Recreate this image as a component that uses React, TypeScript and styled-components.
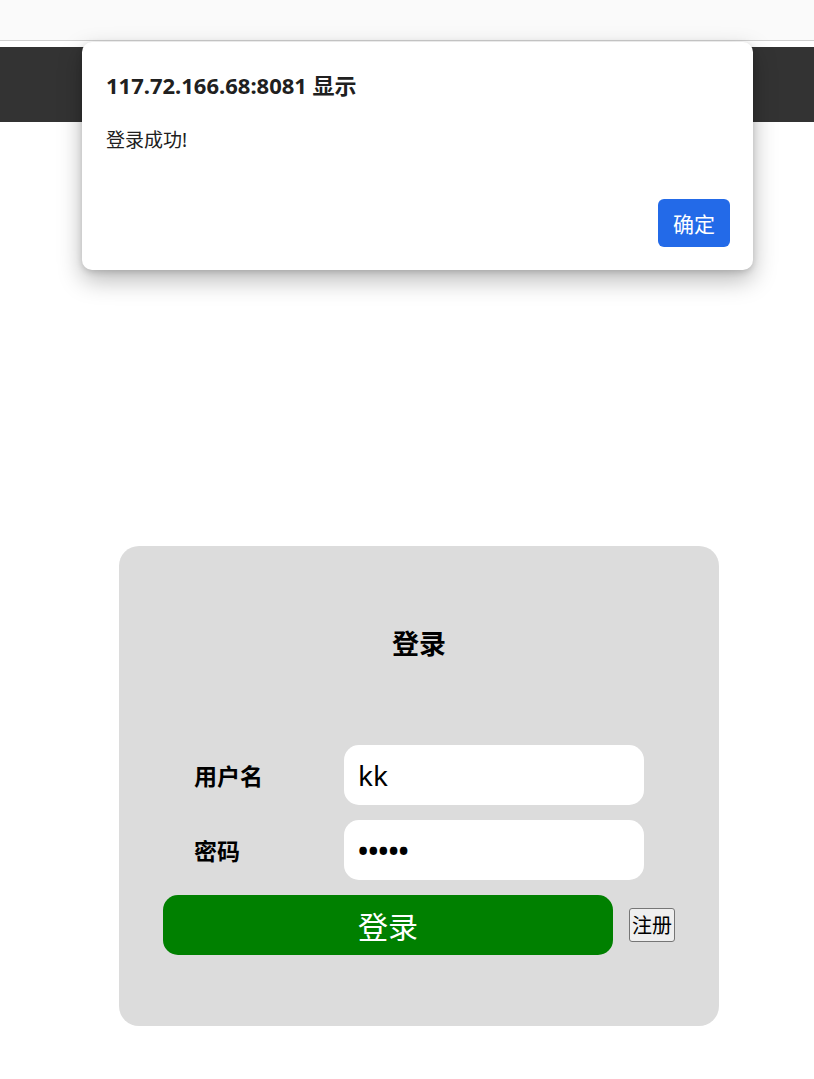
import React from 'react'
import styled, { createGlobalStyle } from 'styled-components'

const GlobalStyle = createGlobalStyle`
    html, body {
        margin: 0;
        padding: 0;
        background: #fff;
        font-family: 'Noto Sans', 'Noto Sans CJK SC', sans-serif;
    }
`

const Page = styled.div`
    position: relative;
    width: 814px;
    min-height: 1079px;
    background: #fff;
`

const BrowserStrip = styled.div`
    height: 40px;
    background: #fafafa;
    border-bottom: 1px solid #d0d0d0;
`

const Header = styled.div`
    margin-top: 6px;
    height: 75px;
    background: #333;
`

const Card = styled.div`
    margin: 424px 0 0 119px;
    width: 600px;
    height: 480px;
    box-sizing: border-box;
    background: #dcdcdc;
    border-radius: 20px;
    display: flex;
    flex-direction: column;
`

const Title = styled.h2`
    margin: 83px 0 0;
    line-height: 30px;
    font-size: 27px;
    font-weight: bold;
    text-align: center;
    color: #000;
`

const Form = styled.div`
    margin-top: 86px;
    display: flex;
    flex-direction: column;
    gap: 15px;
`

const Row = styled.div`
    display: grid;
    grid-template-columns: 150px 300px;
    align-items: center;
    padding-left: 75px;
`

const Label = styled.label`
    font-size: 23px;
    font-weight: bold;
    color: #000;
`

const Input = styled.input`
    width: 300px;
    height: 60px;
    box-sizing: border-box;
    border: none;
    border-radius: 15px;
    background: #fff;
    padding: 0 14px;
    font-family: 'Noto Sans', 'Noto Sans CJK SC', sans-serif;
    font-size: 28px;
    color: #000;
    outline: none;

    &[type='password'] {
        font-size: 27px;
        font-weight: bold;
    }
`

const ActionRow = styled.div`
    display: flex;
    align-items: center;
    gap: 16px;
    padding-left: 44px;
`

const SubmitButton = styled.button`
    width: 450px;
    height: 60px;
    border: none;
    border-radius: 15px;
    background: #008000;
    color: #fff;
    font-family: 'Noto Sans CJK SC', sans-serif;
    font-size: 30px;
    cursor: pointer;
`

const LinkButton = styled.button`
    height: 34px;
    padding: 0 2px;
    border: 1px solid #767676;
    border-radius: 3px;
    background: #efefef;
    color: #000;
    font-family: 'Noto Sans CJK SC', sans-serif;
    font-size: 20px;
    line-height: 1;
`

const Dialog = styled.div`
    position: absolute;
    left: 82px;
    top: 42px;
    width: 671px;
    height: 228px;
    box-sizing: border-box;
    padding: 27px 23px 23px 24px;
    background: #fff;
    border-radius: 10px;
    box-shadow: 0 10px 24px rgba(0, 0, 0, 0.28), 0 2px 6px rgba(0, 0, 0, 0.15);
    display: flex;
    flex-direction: column;
`

const DialogTitle = styled.div`
    font-size: 22px;
    font-weight: bold;
    color: #202020;
    line-height: 32px;
`

const DialogText = styled.div`
    margin-top: 26px;
    font-size: 19px;
    color: #202020;
    line-height: 26px;
`

const DialogFooter = styled.div`
    margin-top: auto;
    display: flex;
    justify-content: flex-end;
`

const OkButton = styled.button`
    width: 72px;
    height: 48px;
    border: none;
    border-radius: 6px;
    background: #236ae8;
    color: #fff;
    font-family: 'Noto Sans CJK SC', sans-serif;
    font-size: 21px;
`

export default function App() {
    return (
        <Page>
            <GlobalStyle />
            <BrowserStrip />
            <Header />
            <Card>
                <Title>登录</Title>
                <Form>
                    <Row>
                        <Label>用户名</Label>
                        <Input type="text" defaultValue="kk" />
                    </Row>
                    <Row>
                        <Label>密码</Label>
                        <Input type="password" defaultValue="12345" />
                    </Row>
                    <ActionRow>
                        <SubmitButton>登录</SubmitButton>
                        <LinkButton>注册</LinkButton>
                    </ActionRow>
                </Form>
            </Card>
            <Dialog>
                <DialogTitle>117.72.166.68:8081 显示</DialogTitle>
                <DialogText>登录成功!</DialogText>
                <DialogFooter>
                    <OkButton>确定</OkButton>
                </DialogFooter>
            </Dialog>
        </Page>
    )
}
